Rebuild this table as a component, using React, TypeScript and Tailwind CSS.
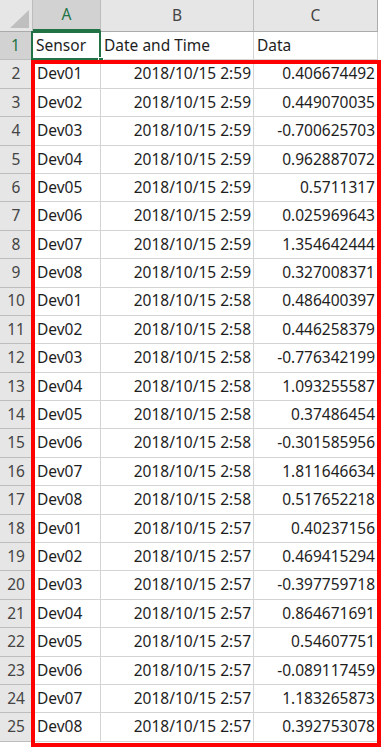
import React from "react";

const rows: [string, string, string][] = [
  ["Dev01", "2018/10/15 2:59", "0.406674492"],
  ["Dev02", "2018/10/15 2:59", "0.449070035"],
  ["Dev03", "2018/10/15 2:59", "-0.700625703"],
  ["Dev04", "2018/10/15 2:59", "0.962887072"],
  ["Dev05", "2018/10/15 2:59", "0.5711317"],
  ["Dev06", "2018/10/15 2:59", "0.025969643"],
  ["Dev07", "2018/10/15 2:59", "1.354642444"],
  ["Dev08", "2018/10/15 2:59", "0.327008371"],
  ["Dev01", "2018/10/15 2:58", "0.486400397"],
  ["Dev02", "2018/10/15 2:58", "0.446258379"],
  ["Dev03", "2018/10/15 2:58", "-0.776342199"],
  ["Dev04", "2018/10/15 2:58", "1.093255587"],
  ["Dev05", "2018/10/15 2:58", "0.37486454"],
  ["Dev06", "2018/10/15 2:58", "-0.301585956"],
  ["Dev07", "2018/10/15 2:58", "1.811646634"],
  ["Dev08", "2018/10/15 2:58", "0.517652218"],
  ["Dev01", "2018/10/15 2:57", "0.40237156"],
  ["Dev02", "2018/10/15 2:57", "0.469415294"],
  ["Dev03", "2018/10/15 2:57", "-0.397759718"],
  ["Dev04", "2018/10/15 2:57", "0.864671691"],
  ["Dev05", "2018/10/15 2:57", "0.54607751"],
  ["Dev06", "2018/10/15 2:57", "-0.089117459"],
  ["Dev07", "2018/10/15 2:57", "1.183265873"],
  ["Dev08", "2018/10/15 2:57", "0.392753078"],
];

export default function App() {
  return (
    <div
      className="relative w-[384px] h-[750px] bg-white overflow-hidden text-[15.5px] leading-none text-[#1e1e1e]"
      style={{ fontFamily: '"Noto Sans", "Liberation Sans", Arial, sans-serif' }}
    >
      {/* column header row */}
      <div className="flex h-[32px] w-[378px] bg-[#e6e6e6] border-b border-[#ababab]">
        <div className="relative w-[33px] h-full border-r border-[#bdbdbd]">
          <svg className="absolute left-0 top-0" width="32" height="31" viewBox="0 0 32 31">
            <polygon points="10,28 29,10 29,28" fill="#bfbfbf" />
          </svg>
        </div>
        <div className="w-[68px] h-full flex items-center justify-center bg-[#d2d2d2] border-r border-[#bdbdbd] border-b-2 border-b-[#217346] text-[#217346]">
          A
        </div>
        <div className="w-[153px] h-full flex items-center justify-center border-r border-[#bdbdbd] text-[#444]">
          B
        </div>
        <div className="w-[124px] h-full flex items-center justify-center border-r border-[#ababab] text-[#444]">
          C
        </div>
      </div>

      {/* header data row 1 */}
      <div className="flex h-[28.4px] w-[378px]">
        <div className="w-[33px] h-full flex items-center justify-center bg-[#d2d2d2] border-r-2 border-r-[#217346] border-b border-[#bdbdbd] text-[#217346]">
          1
        </div>
        <div className="relative w-[68px] h-full flex items-center pl-[3px] border-r border-b border-[#d4d4d4]">
          Sensor
          <div className="absolute left-[-2px] top-[-1px] right-[-1px] bottom-[-1px] border-2 border-[#217346]" />
          <div className="absolute right-[-4px] bottom-[-4px] w-[6px] h-[6px] bg-[#217346] border border-white" />
        </div>
        <div className="w-[153px] h-full flex items-center pl-[3px] border-r border-b border-[#d4d4d4]">
          Date and Time
        </div>
        <div className="w-[124px] h-full flex items-center pl-[3px] border-r border-b border-[#d4d4d4]">
          Data
        </div>
      </div>

      {rows.map((r, i) => (
        <div key={i} className="flex h-[28.4px] w-[378px]">
          <div className="w-[33px] h-full flex items-center justify-center bg-[#e6e6e6] border-r border-b border-[#bdbdbd] text-[#444]">
            {i + 2}
          </div>
          <div className="w-[68px] h-full flex items-center pl-[4px] border-r border-b border-[#d4d4d4]">
            {r[0]}
          </div>
          <div className="w-[153px] h-full flex items-center justify-end pr-[2px] border-r border-b border-[#d4d4d4]">
            {r[1]}
          </div>
          <div className="w-[124px] h-full flex items-center justify-end pr-[2px] border-r border-b border-[#d4d4d4]">
            {r[2]}
          </div>
        </div>
      ))}

      {/* red highlight box */}
      <div className="absolute left-[31px] top-[60px] w-[350px] h-[687px] border-[4px] border-[#ff0000] pointer-events-none" />
    </div>
  );
}
